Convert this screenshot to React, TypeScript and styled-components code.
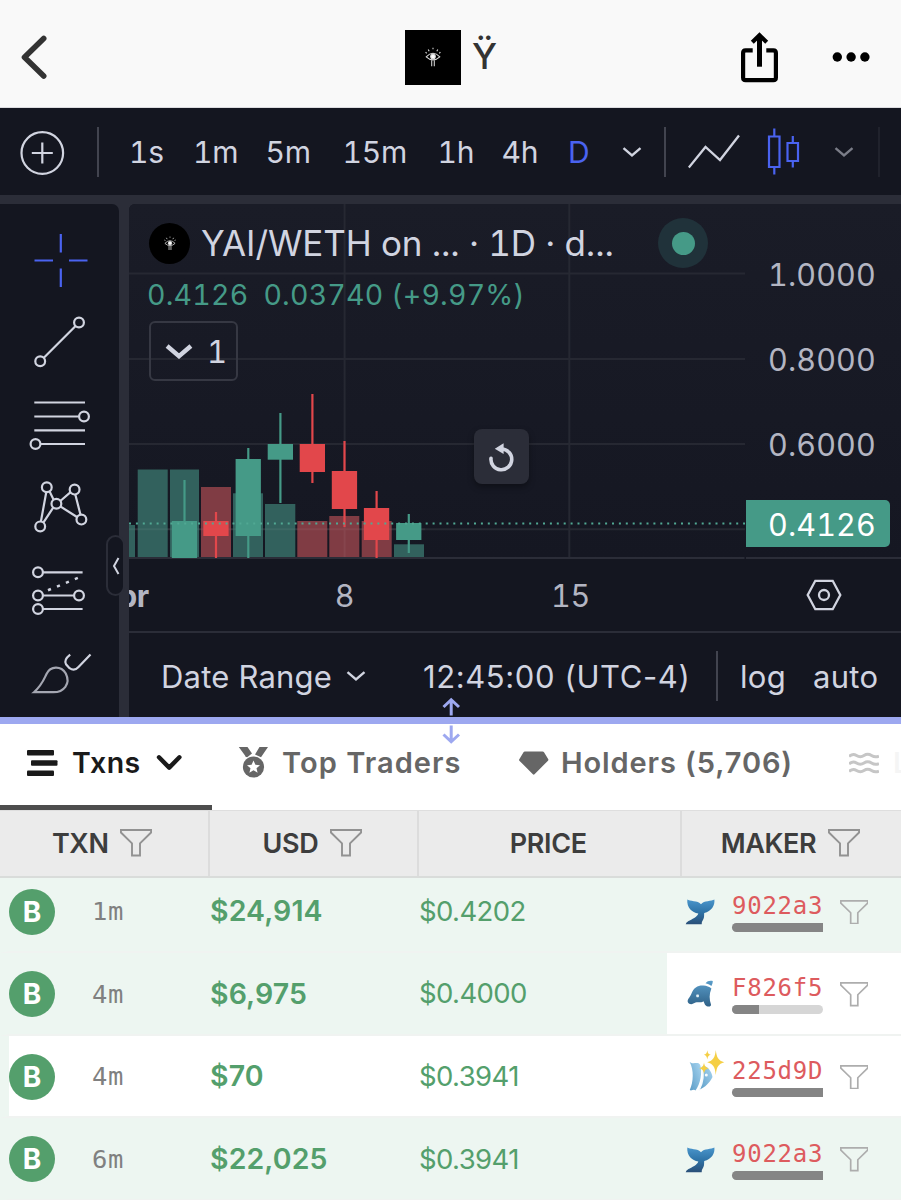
import React from "react";
import styled, { createGlobalStyle } from "styled-components";

const INK = "#141620";
const BAND = "#2b2d38";
const LIGHT = "#d1d4e0";
const TEAL = "#459a87";
const RED = "#e2474b";
const BLUE = "#4a63f0";
const PURPLE = "#9da8f0";
const GREEN = "#549f6c";

const Global = createGlobalStyle`
  * { box-sizing: border-box; }
  html, body { margin: 0; padding: 0; background: #fff; }
  body { font-family: Inter, "Liberation Sans", sans-serif; }
  svg { display: block; flex: none; }
`;

const Screen = styled.main`
  width: 901px;
  height: 1200px;
  overflow: hidden;
  display: flex;
  flex-direction: column;
`;

/* ---------- header ---------- */

const Header = styled.header`
  height: 108px;
  flex: none;
  background: #f9f9f9;
  border-bottom: 1px solid #dcdce0;
  display: grid;
  grid-template-columns: 405px 1fr 165px;
  align-items: center;
  padding-top: 7px;
`;

const Brand = styled.div`
  display: flex;
  align-items: center;
  gap: 11px;
`;

const LogoBox = styled.div`
  width: 56px;
  height: 55px;
  background: #000;
  display: grid;
  place-items: center;
`;

const BrandName = styled.span`
  font-size: 36px;
  line-height: 40px;
  padding-bottom: 2px;
  font-weight: 500;
  color: #333;
`;

const HeaderActions = styled.div`
  display: flex;
  align-items: center;
  gap: 50px;
`;

/* ---------- chart widget ---------- */

const Toolbar = styled.div`
  height: 87px;
  flex: none;
  background: ${INK};
  display: grid;
  grid-template-columns: 96.5px 32.5px 64px 72.5px 77px 95px 64px 66.5px 54px 42px 24px 79px 67px 43.5px 1fr;
  align-items: center;
  font-variant-numeric: tabular-nums;
`;

const Interval = styled.span<{ $active?: boolean }>`
  font-size: 30px;
  line-height: 36px;
  letter-spacing: -0.2px;
  color: ${(p) => (p.$active ? BLUE : LIGHT)};
  white-space: nowrap;
`;

const Divider = styled.i<{ $faint?: boolean }>`
  width: 2px;
  height: 50px;
  background: ${(p) => (p.$faint ? "#20222c" : "#42444f")};
`;

const Widget = styled.div`
  height: 522px;
  flex: none;
  padding-top: 9px;
  background: ${BAND};
  display: grid;
  grid-template-columns: 119px 772px;
  column-gap: 10px;
  position: relative;
  font-variant-numeric: tabular-nums;
`;

const Tools = styled.div`
  background: ${INK};
  border-top-right-radius: 7px;
  overflow: hidden;
`;

const Pane = styled.div`
  background: ${INK};
  border-top-left-radius: 6px;
  overflow: hidden;
  display: flex;
  flex-direction: column;
`;

const PlotRow = styled.div`
  height: 355px;
  flex: none;
  display: flex;
  position: relative;
  background: linear-gradient(#1a1c27, #151722);
`;

const PriceAxis = styled.div`
  width: 155px;
  padding-top: 27.4px;
  border-bottom: 2px solid ${BAND};
  display: flex;
  flex-direction: column;
`;

const PriceLabel = styled.span`
  height: 85.25px;
  display: flex;
  align-items: center;
  padding-left: 22px;
  font-size: 30.5px;
  letter-spacing: 0.15px;
  color: #b3b5c2;
`;

const PriceTag = styled.span`
  margin-top: 12.9px;
  width: 144px;
  height: 47px;
  flex: none;
  border-radius: 0 5px 5px 0;
  background: ${TEAL};
  display: flex;
  align-items: center;
  padding: 2px 0 0 22px;
  font-size: 30.5px;
  letter-spacing: 0.15px;
  color: #fff;
`;

const Legend = styled.div`
  position: absolute;
  left: 20px;
  top: 13px;
  width: 600px;
`;

const LegendTitle = styled.div`
  display: flex;
  align-items: center;
  height: 52px;
`;

const Avatar = styled.span`
  width: 41px;
  height: 41px;
  border-radius: 50%;
  background: #000;
  display: grid;
  place-items: center;
`;

const PairName = styled.span`
  width: 458px;
  padding-left: 11px;
  font-size: 35px;
  letter-spacing: -0.1px;
  color: ${LIGHT};
  white-space: nowrap;
`;

const Status = styled.span`
  margin-left: 10px;
  width: 50px;
  height: 50px;
  border-radius: 50%;
  background: #20323a;
  display: grid;
  place-items: center;
  &::after {
    content: "";
    width: 23px;
    height: 23px;
    border-radius: 50%;
    background: ${TEAL};
  }
`;

const Change = styled.div`
  height: 51px;
  display: flex;
  align-items: center;
  gap: 15px;
  margin-left: -2px;
  font-size: 28.5px;
  letter-spacing: 0.22px;
  color: ${TEAL};
  white-space: nowrap;
`;

const IndicatorToggle = styled.div`
  width: 89px;
  height: 60px;
  margin-top: 1px;
  border: 2px solid #363843;
  border-radius: 6px;
  display: flex;
  align-items: center;
  padding-left: 14px;
  gap: 14px;
  font-size: 31px;
  color: ${LIGHT};
`;

const ResetButton = styled.div`
  position: absolute;
  left: 345px;
  top: 225px;
  width: 55px;
  height: 55px;
  border-radius: 8px;
  background: ${BAND};
  box-shadow: 0 3px 6px rgba(0, 0, 0, 0.35);
  display: grid;
  place-items: center;
`;

const TimeAxis = styled.div`
  height: 74px;
  flex: none;
  border-bottom: 2px solid ${BAND};
  display: grid;
  grid-template-columns: 20px 391px 61px 145px 156px;
  align-items: center;
  justify-items: center;
  font-size: 30.5px;
  letter-spacing: -0.3px;
  color: #b3b5c2;
`;

const MonthLabel = styled.b`
  justify-self: end;
  font-weight: 700;
`;

const Footer = styled.div`
  flex: 1;
  display: grid;
  grid-template-columns: 32px 185px 77px 293px 24px 73px 1fr;
  align-items: center;
  padding-top: 2px;
  font-size: 31px;
  font-variant-numeric: normal;
  color: ${LIGHT};
  white-space: nowrap;
`;

const FooterText = styled.span<{ $spacing: number }>`
  letter-spacing: ${(p) => p.$spacing}px;
`;

const Collapse = styled.div`
  position: absolute;
  left: 106px;
  top: 340px;
  width: 19px;
  height: 61px;
  border: 2px solid ${BAND};
  border-radius: 10px;
  background: ${INK};
  display: grid;
  place-items: center;
`;

const Splitter = styled.div`
  height: 7px;
  flex: none;
  background: ${PURPLE};
  position: relative;
`;

const SplitArrows = styled.svg`
  position: absolute;
  left: 441px;
  top: -20px;
`;

/* ---------- tabs and table ---------- */

const Tabs = styled.nav`
  height: 86px;
  flex: none;
  background: #fff;
  display: grid;
  grid-template-columns: 212px 280px 330px 79px;
  overflow: hidden;
`;

const Tab = styled.div<{ $active?: boolean; $pad: number; $gap: number }>`
  display: flex;
  align-items: center;
  padding-left: ${(p) => p.$pad}px;
  padding-bottom: ${(p) => (p.$active ? 4 : 9)}px;
  gap: ${(p) => p.$gap}px;
  border-bottom: ${(p) => (p.$active ? "5px solid #4d4d4d" : "0")};
  color: ${(p) => (p.$active ? "#1a1a1a" : "#666")};
  white-space: nowrap;
  overflow: hidden;
`;

const TabLabel = styled.span<{ $spacing: number; $faded?: boolean }>`
  font-size: ${(p) => (p.$spacing > 1 ? 29 : 28.5)}px;
  font-weight: 600;
  letter-spacing: ${(p) => p.$spacing - (p.$spacing > 1 ? 0.3 : 0)}px;
  opacity: ${(p) => (p.$faded ? 0.06 : 1)};
`;

const TableHead = styled.div`
  height: 68px;
  flex: none;
  display: grid;
  grid-template-columns: 208px 209px 263px 1fr;
  background: #ebebeb;
  border-top: 1px solid #dedede;
  border-bottom: 2px solid #d9dcda;
`;

const HeadCell = styled.div`
  display: flex;
  align-items: center;
  justify-content: center;
  gap: 11.5px;
  padding-bottom: 1px;
  font-size: 27px;
  font-weight: 600;
  letter-spacing: -0.35px;
  color: #3d3d3d;
  & + & {
    border-left: 2px solid #dcdcdc;
  }
  &:first-child {
    padding-right: 4px;
  }
  &:nth-child(n + 2) {
    padding-right: 2.5px;
  }
`;

const Body = styled.div`
  flex: 1;
  overflow: hidden;
`;

const Rows = styled.div`
  margin-top: -7.5px;
`;

const Row = styled.div<{ $tone: "buy" | "plain" }>`
  height: 82.6px;
  border-bottom: 2px solid #f0f3f1;
  border-left: 9px solid #edf6f1;
  background: ${(p) => (p.$tone === "buy" ? "#edf6f1" : "#fff")};
  display: grid;
  grid-template-columns: 83px 118px 209px 248px 1fr;
  align-items: center;
`;

const Badge = styled.span`
  width: 46px;
  height: 46px;
  margin-top: 1.5px;
  border-radius: 50%;
  background: ${GREEN};
  color: #fff;
  font-size: 28px;
  font-weight: 700;
  line-height: 46px;
  text-align: center;
`;

const Age = styled.span`
  padding-top: 1px;
  font-family: "DejaVu Sans Mono", "Liberation Mono", monospace;
  font-size: 25.5px;
  letter-spacing: 0.7px;
  color: #808080;
`;

const Amount = styled.span`
  font-size: 28.5px;
  font-weight: 600;
  letter-spacing: 0.1px;
  color: ${GREEN};
`;

const Price = styled.span`
  font-size: 27.5px;
  letter-spacing: -0.6px;
  color: ${GREEN};
`;

const Maker = styled.div<{ $plain?: boolean }>`
  align-self: stretch;
  background: ${(p) => (p.$plain ? "#fff" : "transparent")};
  display: grid;
  grid-template-columns: 65px 107.5px 1fr;
  align-items: center;
  padding-top: 2px;
`;

const Animal = styled.div<{ $lift: number }>`
  padding-left: 14px;
  padding-bottom: ${(p) => p.$lift}px;
`;

const MakerId = styled.div`
  display: flex;
  flex-direction: column;
  gap: 3px;
  font-family: "DejaVu Sans Mono", "Liberation Mono", monospace;
  font-size: 24px;
  line-height: 28px;
  letter-spacing: 0.75px;
  color: #dd5b5e;
`;

const Meter = styled.div`
  width: 91px;
  height: 9px;
  border-radius: 5px;
  background: #d6d6d6;
`;

const MeterFill = styled.div`
  height: 100%;
  border-radius: 5px 0 0 5px;
  background: #858585;
`;

/* ---------- drawings ---------- */

const Eye = ({ size }: { size: number }) => (
  <svg width={size} height={size * 1.2} viewBox="0 0 20 24" fill="none" stroke="#dedede" strokeWidth="1.3">
    <path d="M1.5 12.3Q10 3.5 18.5 12.3Q10 20 1.5 12.3Z" />
    <circle cx="10" cy="12" r="2.9" fill="#fff" />
    <path d="M2 8L.8 6.2M5.2 5.3L4 3M10 2.8V1M14.8 5.3L16 3M18 8l1.2-1.8" />
    <path d="M8.4 16.5V24M11.6 16.5V24" />
  </svg>
);

const Chevron = ({ w, stroke, color }: { w: number; stroke: number; color: string }) => (
  <svg width={w} height={w * 0.6} viewBox="0 0 20 12" fill="none" stroke={color} strokeWidth={stroke}>
    <path d="M1.5 2.2L10 9.4L18.5 2.2" />
  </svg>
);

const Funnel = ({ w, color }: { w: number; color: string }) => (
  <svg width={w} height={w * 0.86} viewBox="0 0 32 27.5" fill="none" stroke={color} strokeWidth="1.9">
    <path d="M.95.95H31.05V3.5L20 14.3V26.5H12V14.3L.95 3.5Z" />
  </svg>
);

const ToolIcons = () => (
  <svg width="119" height="513" viewBox="0 204 119 513" fill="none" stroke={LIGHT} strokeWidth="2.2">
    <path stroke={BLUE} d="M60.8 234v18.5M60.8 268.5v18.5M34.5 260.5h18.5M69 260.5h18.5" />
    <path d="M43.6 358L75.6 326" />
    <circle cx="79" cy="322.5" r="4.9" />
    <circle cx="40.2" cy="361.3" r="4.9" />
    <path d="M34.3 402.5H85M34.3 416.5H79M34.3 430.3H85M40 444H85" />
    <circle cx="84" cy="416.5" r="4.9" />
    <circle cx="35.5" cy="444" r="4.9" />
    <path d="M46.3 492L40.9 521.5M49.6 491.6L53.5 499.5M60.3 501L70.3 492.4M75.3 494.5L80.5 514.7M60.3 506.4L77 517M53.2 507.6L43.5 522.3" />
    <circle cx="46.8" cy="487.3" r="4.9" />
    <circle cx="74.6" cy="489.6" r="4.9" />
    <circle cx="56.4" cy="503.8" r="4.9" />
    <circle cx="81.4" cy="519.6" r="4.9" />
    <circle cx="40.2" cy="526.4" r="4.9" />
    <path d="M42.8 572.3H82.6M42.8 595.5H74M42.8 609H82.6" />
    <path d="M48 590.3L80 577" strokeDasharray="3.2 6.5" strokeWidth="2.6" />
    <circle cx="38" cy="572.3" r="4.9" />
    <circle cx="38" cy="595.5" r="4.9" />
    <circle cx="79" cy="595.5" r="4.9" />
    <circle cx="38" cy="609" r="4.9" />
    <path d="M70.2 654.6Q63.5 659.8 66 664.3L69.5 668.2Q74.5 671.5 78.5 667L90.5 654.6" />
    <path stroke="#a4a6b1" d="M34 692.2C42 685 43.8 679.5 46.5 674C50.5 665.7 61 665.7 65.8 673.5C71 684 63.5 692.2 53.5 692.2Z" />
  </svg>
);

type Candle = { x: number; up: boolean; top: number; bottom: number; high: number; low: number };

const volumes: [number, number, number, boolean][] = [
  [129, 6, 525, true],
  [137.7, 30, 469.5, true],
  [170, 29, 469.5, true],
  [201, 30, 487, false],
  [233, 30, 493.3, true],
  [265, 30.3, 504, true],
  [297.3, 30, 521, false],
  [329.3, 30, 516, false],
  [361.7, 30, 521, false],
  [394, 30, 544.3, true],
];

const candles: Candle[] = [
  { x: 184.5, up: true, top: 521, bottom: 558, high: 480, low: 558 },
  { x: 216, up: false, top: 521, bottom: 536, high: 512, low: 558 },
  { x: 248.3, up: true, top: 459, bottom: 536, high: 448, low: 558 },
  { x: 280.4, up: true, top: 444, bottom: 459.7, high: 413, low: 503 },
  { x: 312.4, up: false, top: 444, bottom: 472, high: 394, low: 483 },
  { x: 344.5, up: false, top: 471, bottom: 509, high: 441, low: 527 },
  { x: 376.6, up: false, top: 508, bottom: 540, high: 491, low: 558 },
  { x: 408.8, up: true, top: 523, bottom: 540, high: 514, low: 553 },
];

const Plot = () => (
  <svg width="617" height="355" viewBox="129 204 617 355">
    <path d="M129 273.5H745M129 359H745M129 444H745M129 529.3H745M344.6 204V558M569.3 204V558" stroke="#262832" strokeWidth="2" />
    <path d="M129 558H744.5" stroke={BAND} strokeWidth="2" />
    {volumes.map(([x, w, y, up]) => (
      <rect key={x} x={x} y={y} width={w} height={557 - y} fill={up ? "#32615d" : "#803c44"} />
    ))}
    <path d="M129 529.3H425M344.6 516V557" stroke="#fff" strokeOpacity="0.05" strokeWidth="2" />
    {candles.map((c) => (
      <g key={c.x} fill={c.up ? TEAL : RED}>
        <rect x={c.x - 1.1} y={c.high} width="2.2" height={c.low - c.high} />
        <rect x={c.x - 12.7} y={c.top} width="25.3" height={c.bottom - c.top} />
      </g>
    ))}
    <path d="M129 523.5H745" stroke="#51a893" strokeWidth="2" strokeDasharray="2 4.9" />
  </svg>
);

const WhaleTail = () => (
  <svg width="38" height="30" viewBox="0 0 38 30">
    <defs>
      <linearGradient id="tail" x1="0" y1="0" x2="0" y2="1">
        <stop offset="0" stopColor="#4a95cb" />
        <stop offset="0.5" stopColor="#2f74a8" />
        <stop offset="1" stopColor="#2a4f78" />
      </linearGradient>
    </defs>
    <path
      fill="url(#tail)"
      d="M6.3 2.6C8.5 4.6 17 3.4 20 7.2C23 3.4 30.5 4.6 33.4 2.6C34 8.5 30.5 14.6 23.2 16C23 18.5 23.4 20.5 22.2 22.6Q20.5 25 20.7 27.2H4.7Q5 25.2 7.5 24C10.5 22.5 16.6 19.8 17.3 16.5C11 15.8 5.6 10.5 6.3 2.6Z"
    />
  </svg>
);

const Dolphin = () => (
  <svg width="38" height="30" viewBox="0 0 38 30">
    <defs>
      <linearGradient id="dolphin" x1="0" y1="0" x2="0" y2="1">
        <stop offset="0" stopColor="#5a9dca" />
        <stop offset="1" stopColor="#2f6187" />
      </linearGradient>
    </defs>
    <path
      fill="url(#dolphin)"
      d="M24.5 4.2C26.2 1.7 29.5 1.2 31.8 2C31.7 4 31.2 5.5 30.4 7C28.5 5.4 26.8 4.8 24.5 4.2ZM7 23.5C5.6 20.5 9.3 18.3 10.5 14.5C12.5 8.5 17.5 6 22.5 6.5C25.5 6.8 28.5 7.7 30.4 9.4C28 15 28.3 20.5 30 25.5C30.2 28.5 25.8 28 24 25.7L22.5 22.3C20 24.5 17.5 22.3 14.5 23.6C12 25.3 8.5 26 7 23.5Z"
    />
    <rect x="15.3" y="15.6" width="2.6" height="2.6" rx=".6" fill="#e5f1f7" />
  </svg>
);

const SparkFish = () => (
  <svg width="46" height="44" viewBox="0 0 46 44">
    <defs>
      <linearGradient id="fish" x1="1" y1="0" x2="0" y2="1">
        <stop offset="0" stopColor="#a9d6f1" />
        <stop offset="1" stopColor="#5b9cc6" />
      </linearGradient>
    </defs>
    <g fill="url(#fish)">
      <path d="M8.7 12C12 15 17 11 19.2 15C21.5 22 19.5 34 14.5 40.5C12.5 38.5 10.5 41.5 8.8 40C12.5 32 13 20 8.7 12Z" />
      <path d="M21.2 16C26 15 30.7 21 31.5 27C29 32.5 24 37.5 18.2 39.8C22.2 32 23.2 24.5 21.2 16Z" />
    </g>
    <path d="M20.5 15.5C23.3 24 22.5 32 18 40.5" stroke="#f4fafd" strokeWidth="1.5" fill="none" />
    <circle cx="25.3" cy="25" r="1.5" fill="#f6fafc" />
    <path fill="#f5cf45" d="M34.8 0C35.6 7.5 37.3 10.5 43.3 12.3C37.3 14 35.6 17 34.8 25C34 17 32.3 14 26.2 12.3C32.3 10.5 34 7.5 34.8 0ZM26.3 .3C26.8 3.4 27.5 4.2 29.8 4.8C27.5 5.4 26.8 6.5 26.3 9.5C25.8 6.5 25.1 5.4 22.8 4.8C25.1 4.2 25.8 3.4 26.3 .3ZM23 12.5C23.5 16 24.7 17.5 28 18.2C24.7 19 23.5 20.3 23 24C22.5 20.3 21.3 19 18 18.2C21.3 17.5 22.5 16 23 12.5Z" />
  </svg>
);

const animals = { tail: WhaleTail, dolphin: Dolphin, fish: SparkFish };

type Txn = {
  age: string;
  usd: string;
  price: string;
  maker: string;
  animal: keyof typeof animals;
  share: number;
  tone: "buy" | "plain";
  plainMaker?: boolean;
};

const txns: Txn[] = [
  { age: "1m", usd: "$24,914", price: "$0.4202", maker: "9022a3", animal: "tail", share: 100, tone: "buy" },
  { age: "4m", usd: "$6,975", price: "$0.4000", maker: "F826f5", animal: "dolphin", share: 30, tone: "buy", plainMaker: true },
  { age: "4m", usd: "$70", price: "$0.3941", maker: "225d9D", animal: "fish", share: 100, tone: "plain" },
  { age: "6m", usd: "$22,025", price: "$0.3941", maker: "9022a3", animal: "tail", share: 100, tone: "buy" },
];

const TxnRow = ({ txn }: { txn: Txn }) => {
  const Icon = animals[txn.animal];
  return (
    <Row $tone={txn.tone}>
      <Badge>B</Badge>
      <Age>{txn.age}</Age>
      <Amount>{txn.usd}</Amount>
      <Price>{txn.price}</Price>
      <Maker $plain={txn.plainMaker}>
        <Animal $lift={txn.animal === "fish" ? 9 : 0}>
          <Icon />
        </Animal>
        <MakerId>
          {txn.maker}
          <Meter>
            <MeterFill style={{ width: `${txn.share}%` }} />
          </Meter>
        </MakerId>
        <Funnel w={28.5} color="#adadad" />
      </Maker>
    </Row>
  );
};

export default function App() {
  return (
    <Screen>
      <Global />
      <Header>
        <svg width="70" height="60" viewBox="0 27 70 60" fill="none" stroke="#333" strokeWidth="5.6" strokeLinecap="round" strokeLinejoin="round">
          <path d="M43.7 38.5L24.5 57.3L43.7 76" />
        </svg>
        <Brand>
          <LogoBox>
            <Eye size={16} />
          </LogoBox>
          <BrandName>Ÿ</BrandName>
        </Brand>
        <HeaderActions>
          <svg width="46" height="54" viewBox="736 30 46 54" fill="none" stroke="#000" strokeWidth="4.2">
            <path d="M752.7 50.4H745.6Q743.1 50.4 743.1 53V77.6Q743.1 80.2 745.6 80.2H773.4Q775.9 80.2 775.9 77.6V53Q775.9 50.4 773.4 50.4H766.3" />
            <path d="M759.5 66.7V36" strokeWidth="5" />
            <path d="M752.3 42.3L759.5 35.2L766.7 42.3" />
          </svg>
          <svg width="40" height="12" viewBox="0 0 40 12">
            <circle cx="5.3" cy="6" r="4.7" />
            <circle cx="19.1" cy="6" r="4.7" />
            <circle cx="32.9" cy="6" r="4.7" />
          </svg>
        </HeaderActions>
      </Header>

      <Toolbar>
        <svg width="96" height="50" viewBox="0 0 96 50" fill="none" stroke={LIGHT} strokeWidth="2.2">
          <circle cx="42.3" cy="26" r="20.8" />
          <path d="M42.3 15.5v21M31.8 26h21" />
        </svg>
        <Divider />
        <Interval>1s</Interval>
        <Interval>1m</Interval>
        <Interval>5m</Interval>
        <Interval>15m</Interval>
        <Interval>1h</Interval>
        <Interval>4h</Interval>
        <Interval $active>D</Interval>
        <Chevron w={20} stroke={2.4} color={LIGHT} />
        <Divider />
        <svg width="54" height="36" viewBox="0 0 54 36" fill="none" stroke={LIGHT} strokeWidth="2.3">
          <path d="M.8 33.5L17.5 13L32 26L51 1.5" />
        </svg>
        <svg width="34" height="48" viewBox="0 0 34 48" fill="none" stroke={BLUE} strokeWidth="2.2">
          <path d="M2 8.5H12.5V39H2ZM7.3 .5V8.5M7.3 39V46.5M20.5 15H31V33H20.5ZM25.8 8V15M25.8 33V39.5" />
        </svg>
        <Chevron w={20} stroke={2.4} color="#7b7d88" />
        <Divider $faint />
      </Toolbar>

      <Widget>
        <Tools>
          <ToolIcons />
        </Tools>
        <Pane>
          <PlotRow>
            <Plot />
            <PriceAxis>
              <PriceLabel>1.0000</PriceLabel>
              <PriceLabel>0.8000</PriceLabel>
              <PriceLabel>0.6000</PriceLabel>
              <PriceTag>0.4126</PriceTag>
            </PriceAxis>
            <Legend>
              <LegendTitle>
                <Avatar>
                  <Eye size={12} />
                </Avatar>
                <PairName>YAI/WETH on ... · 1D · d...</PairName>
                <Status />
              </LegendTitle>
              <Change>
                <span>0.4126</span>
                <span>0.03740 (+9.97%)</span>
              </Change>
              <IndicatorToggle>
                <Chevron w={28} stroke={3.2} color={LIGHT} />
                <span>1</span>
              </IndicatorToggle>
            </Legend>
            <ResetButton>
              <svg width="28" height="32" viewBox="0 0 28 32" fill="none">
                <path d="M3 17.3A10.4 10.4 0 1 0 13.6 8" stroke={LIGHT} strokeWidth="3.6" strokeLinecap="round" />
                <path d="M15.6 2.3V13L6.8 7.7Z" fill={LIGHT} />
              </svg>
            </ResetButton>
          </PlotRow>
          <TimeAxis>
            <MonthLabel>Apr</MonthLabel>
            <span>8</span>
            <span>15</span>
            <span />
            <svg width="36" height="32" viewBox="0 0 36 32" fill="none" stroke={LIGHT} strokeWidth="2.3">
              <path d="M9.3 1.8H26.7L34.3 16L26.7 30.2H9.3L1.7 16Z" />
              <circle cx="18" cy="16" r="5" />
            </svg>
          </TimeAxis>
          <Footer>
            <i />
            <FooterText $spacing={0.2}>Date Range</FooterText>
            <Chevron w={20} stroke={2.4} color={LIGHT} />
            <FooterText $spacing={0.6}>12:45:00 (UTC-4)</FooterText>
            <Divider />
            <FooterText $spacing={0.3}>log</FooterText>
            <FooterText $spacing={0.3}>auto</FooterText>
          </Footer>
        </Pane>
        <Collapse>
          <svg width="8" height="18" viewBox="0 0 8 18" fill="none" stroke={LIGHT} strokeWidth="2">
            <path d="M6.5 1L2 9L6.5 17" />
          </svg>
        </Collapse>
      </Widget>

      <Splitter>
        <SplitArrows width="20" height="48" viewBox="0 0 20 48" fill="none" stroke={PURPLE} strokeWidth="3">
          <path d="M10.2 18.5V3.5M2.5 10L10.2 2.7L18 10" />
          <path d="M10.2 28.5V44M2.5 37.5L10.2 44.8L18 37.5" />
        </SplitArrows>
      </Splitter>

      <Tabs>
        <Tab $active $pad={27} $gap={14}>
          <svg width="31" height="28" viewBox="0 0 31 28" fill="#1a1a1a">
            <rect x="0" y="1" width="27" height="5.4" rx="1" />
            <rect x="4" y="11.3" width="26.5" height="5.4" rx="1" />
            <rect x="0" y="21.6" width="27" height="5.4" rx="1" />
          </svg>
          <TabLabel $spacing={0.4}>Txns</TabLabel>
          <svg width="28" height="18" viewBox="0 0 28 18" fill="none" stroke="#1a1a1a" strokeWidth="4.4" strokeLinecap="round" strokeLinejoin="round">
            <path d="M4 3.3L14.2 13.6L24.4 3.3" />
          </svg>
        </Tab>
        <Tab $pad={26} $gap={13}>
          <svg width="31" height="31" viewBox="0 0 31 31" fill="#666">
            <path d="M.8 0H9.5L14 6.5L9.2 10.2Q7 10 7 8.5ZM21.5 0H30L23 10.2L17 7.5Z" />
            <circle cx="15.5" cy="20" r="10.6" />
            <path fill="#fff" d="M15.5 13.5L17.4 17.8L22 18.2L18.5 21.2L19.6 25.8L15.5 23.3L11.4 25.8L12.5 21.2L9 18.2L13.6 17.8Z" />
          </svg>
          <TabLabel $spacing={1.35}>Top Traders</TabLabel>
        </Tab>
        <Tab $pad={27} $gap={12}>
          <svg width="30" height="24" viewBox="0 0 30 24" fill="#666">
            <path d="M5.8 .5H23.5Q24.5 .5 25 1.3L29.3 8.2Q29.6 9 29 9.7L15.5 23.3Q14.7 24 13.9 23.3L.4 9.7Q-.2 9 .3 8.2L4.5 1.3Q5 .5 5.8 .5Z" />
          </svg>
          <TabLabel $spacing={1.2}>Holders (5,706)</TabLabel>
        </Tab>
        <Tab $pad={27} $gap={14}>
          <svg width="30" height="22" viewBox="0 0 30 22" fill="none" stroke="#c6c6c6" strokeWidth="3">
            {[3.5, 11, 18.5].map((y) => (
              <path key={y} d={`M0 ${y + 1}Q3.7 ${y - 2.4} 7.5 ${y}T15 ${y}T22.5 ${y}T30 ${y + 0.5}`} />
            ))}
          </svg>
          <TabLabel $spacing={0} $faded>L</TabLabel>
        </Tab>
      </Tabs>

      <TableHead>
        <HeadCell>TXN <Funnel w={32} color="#929292" /></HeadCell>
        <HeadCell>USD <Funnel w={32} color="#929292" /></HeadCell>
        <HeadCell>PRICE</HeadCell>
        <HeadCell>MAKER <Funnel w={32} color="#929292" /></HeadCell>
      </TableHead>
      <Body>
        <Rows>
          {txns.map((t, i) => (
            <TxnRow key={i} txn={t} />
          ))}
        </Rows>
      </Body>
    </Screen>
  );
}
